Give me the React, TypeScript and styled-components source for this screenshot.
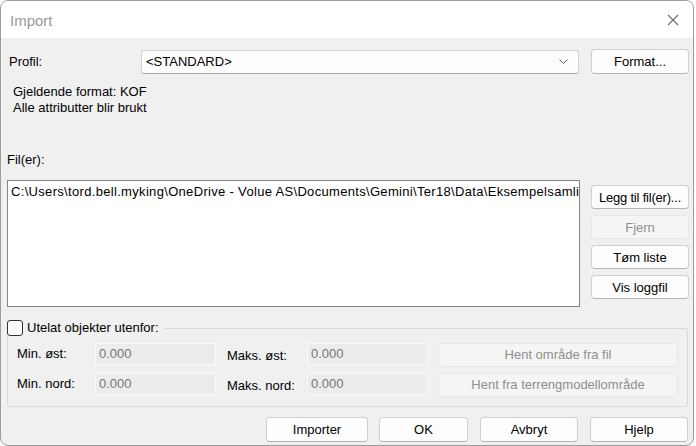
import React from 'react';
import styled, { createGlobalStyle } from 'styled-components';

const GlobalStyle = createGlobalStyle`
    html, body {
        margin: 0;
        padding: 0;
        background: #ffffff;
    }
    body {
        font-family: 'Liberation Sans', Arial, sans-serif;
        font-size: 13px;
        color: #000;
    }
`;

const Window = styled.div`
    box-sizing: border-box;
    width: 694px;
    height: 446px;
    display: flex;
    flex-direction: column;
    background: #f0f0f0;
    border: 1px solid #9c9c9c;
    border-radius: 8px;
    overflow: hidden;
`;

const TitleBar = styled.div`
    height: 37px;
    flex: none;
    display: flex;
    align-items: center;
    justify-content: space-between;
    background: #ffffff;
    padding: 0 14px 0 9px;
    box-sizing: border-box;

    h1 {
        margin: 0;
        font-size: 15px;
        font-weight: normal;
        color: #9a9a9a;
        padding-top: 1px;
    }
`;

const Body = styled.div`
    flex: 1;
    display: flex;
    flex-direction: column;
    padding: 0 5px 0 6px;
`;

const ProfileRow = styled.div`
    display: grid;
    grid-template-columns: 134px 438px 97px;
    align-items: center;
    margin-top: 11px;
    height: 25px;

    label {
        padding-left: 2px;
    }

    button {
        margin-left: 12px;
    }
`;

const Combo = styled.div`
    box-sizing: border-box;
    height: 24px;
    display: flex;
    align-items: center;
    justify-content: space-between;
    padding: 0 10px 0 4px;
    background: #fdfdfd;
    border: 1px solid #d3d3d3;
    border-bottom-color: #a8a8a8;
    border-radius: 3px;
`;

const Info = styled.div`
    margin-top: 10px;
    padding-left: 6px;
    line-height: 16px;
`;

const FilesLabel = styled.div`
    margin-top: 36px;
    line-height: 16px;
`;

const FilesRow = styled.div`
    display: flex;
    margin-top: 12px;
`;

const ListBox = styled.div`
    box-sizing: border-box;
    flex: none;
    width: 573px;
    height: 127px;
    background: #ffffff;
    border: 1px solid #858585;
    padding: 3px 0 0 3px;
    white-space: nowrap;
    overflow: hidden;
    line-height: 16px;
    letter-spacing: 0.32px;
`;

const SideButtons = styled.div`
    display: flex;
    flex-direction: column;
    gap: 6px;
    margin-left: 11px;
    padding-top: 5px;
`;

const Button = styled.button<{ $w?: number; $h?: number }>`
    box-sizing: border-box;
    width: ${(p) => (p.$w ? `${p.$w}px` : '98px')};
    height: ${(p) => (p.$h ? `${p.$h}px` : '24px')};
    padding: 0;
    white-space: nowrap;
    font-family: 'Liberation Sans', Arial, sans-serif;
    font-size: 13px;
    color: #000;
    background: #fdfdfd;
    border: 1px solid #d0d0d0;
    border-bottom-color: #b5b5b5;
    border-radius: 4px;

    &:disabled {
        color: #8f8f8f;
        background: #f5f5f5;
        border-color: #e6e6e6;
    }
`;

const TightButton = styled(Button)`
    letter-spacing: -0.2px;
`;

const Group = styled.fieldset`
    box-sizing: border-box;
    margin: 13px 0 0 0;
    padding: 0;
    width: 681px;
    height: 87px;
    border: 1px solid #dadada;
    border-radius: 2px;
`;

const Legend = styled.legend`
    display: flex;
    align-items: center;
    gap: 4px;
    margin-left: -1px;
    padding: 0 5px 0 0;
    line-height: 16px;
`;

const CheckBox = styled.span`
    box-sizing: border-box;
    width: 16px;
    height: 16px;
    border: 1px solid #333;
    border-radius: 3px;
    background: #fdfdfd;
`;

const Bounds = styled.div`
    display: grid;
    grid-template-columns: 78px 121px 91px 121px 249px;
    grid-template-rows: 23px 23px;
    row-gap: 7px;
    align-items: center;
    padding: 6px 0 0 9px;
`;

const FieldLabel = styled.span<{ $second?: boolean }>`
    padding-top: ${(p) => (p.$second ? '3px' : '0')};
    padding-left: ${(p) => (p.$second ? '11px' : '0')};
`;

const Field = styled.div`
    box-sizing: border-box;
    height: 22px;
    padding: 2px 0 0 3px;
    background: #ececec;
    border: 1px solid #f9f9f9;
    color: #777;
    line-height: 16px;
`;

const FieldButton = styled(Button)`
    margin-left: 10px;
    margin-top: 2px;
`;

const Footer = styled.div`
    display: flex;
    justify-content: flex-end;
    gap: 12px;
    margin-top: 10px;
`;

const ChevronDown = () => (
    <svg width="9" height="5" viewBox="0 0 9 5">
        <path d="M0.5 0.5 L4.5 4.5 L8.5 0.5" fill="none" stroke="#555" strokeWidth="1" />
    </svg>
);

const CloseIcon = () => (
    <svg width="12" height="12" viewBox="0 0 12 12">
        <path d="M1 1 L11 11 M11 1 L1 11" stroke="#6a6a6a" strokeWidth="1.1" />
    </svg>
);

export default function App() {
    return (
        <>
            <GlobalStyle />
            <Window>
                <TitleBar>
                    <h1>Import</h1>
                    <CloseIcon />
                </TitleBar>
                <Body>
                    <ProfileRow>
                        <label>Profil:</label>
                        <Combo>
                            <span>&lt;STANDARD&gt;</span>
                            <ChevronDown />
                        </Combo>
                        <Button $h={25}>Format...</Button>
                    </ProfileRow>
                    <Info>
                        <div>Gjeldende format: KOF</div>
                        <div>Alle attributter blir brukt</div>
                    </Info>
                    <FilesLabel>Fil(er):</FilesLabel>
                    <FilesRow>
                        <ListBox>
                            C:\Users\tord.bell.myking\OneDrive - Volue AS\Documents\Gemini\Ter18\Data\Eksempelsamling\KOF\eksempel.kof
                        </ListBox>
                        <SideButtons>
                            <TightButton>Legg til fil(er)...</TightButton>
                            <Button disabled>Fjern</Button>
                            <Button>Tøm liste</Button>
                            <Button>Vis loggfil</Button>
                        </SideButtons>
                    </FilesRow>
                    <Group>
                        <Legend>
                            <CheckBox />
                            Utelat objekter utenfor:
                        </Legend>
                        <Bounds>
                            <FieldLabel>Min. øst:</FieldLabel>
                            <Field>0.000</Field>
                            <FieldLabel $second>Maks. øst:</FieldLabel>
                            <Field>0.000</Field>
                            <FieldButton disabled $w={240}>Hent område fra fil</FieldButton>
                            <FieldLabel>Min. nord:</FieldLabel>
                            <Field>0.000</Field>
                            <FieldLabel $second>Maks. nord:</FieldLabel>
                            <Field>0.000</Field>
                            <FieldButton disabled $w={240}>Hent fra terrengmodellområde</FieldButton>
                        </Bounds>
                    </Group>
                    <Footer>
                        <Button $w={102} $h={25} style={{ marginRight: -1 }}>Importer</Button>
                        <Button $w={89} $h={25}>OK</Button>
                        <Button $w={98} $h={25}>Avbryt</Button>
                        <Button $w={98} $h={25}>Hjelp</Button>
                    </Footer>
                </Body>
            </Window>
        </>
    );
}
